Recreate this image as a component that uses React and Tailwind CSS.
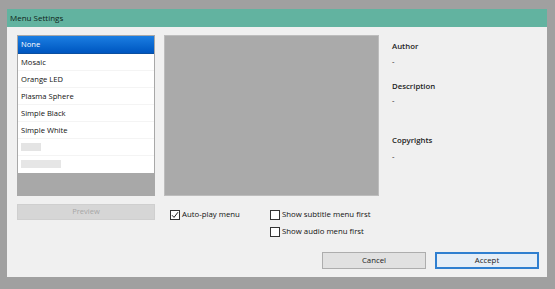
import { useState } from 'react'

const themes = ['None', 'Mosaic', 'Orange LED', 'Plasma Sphere', 'Simple Black', 'Simple White']

const CheckBox = ({ checked, label, onChange }) => (
  <label className="flex items-center gap-[2px] h-[11px] cursor-default">
    <span className="w-[10px] h-[10px] border border-[#333] bg-white flex items-center justify-center">
      {checked && (
        <svg width="8" height="8" viewBox="0 0 8 8">
          <path d="M1 4.2 L3 6.4 L7 1.2" fill="none" stroke="#222" strokeWidth="1" />
        </svg>
      )}
    </span>
    <input type="checkbox" className="hidden" checked={checked} onChange={onChange} />
    <span className="text-[7.8px] text-[#111] leading-none">{label}</span>
  </label>
)

export default function App() {
  const [selected, setSelected] = useState('None')
  const [autoPlay, setAutoPlay] = useState(true)
  const [subFirst, setSubFirst] = useState(false)
  const [audioFirst, setAudioFirst] = useState(false)

  return (
    <div className="w-[555px] h-[289px] bg-[#a0a0a0] pt-[9px] pl-[7px] overflow-hidden" style={{ fontFamily: '"Open Sans", "Noto Sans", sans-serif' }}>
      <div className="w-[540px] h-[268px] bg-[#f0f0f0] flex flex-col">
        {/* Title bar */}
        <div className="h-[18px] bg-[#62b3a0] flex items-center pl-[3px]">
          <span className="text-[8px] font-medium text-[#0f1f19]">Menu Settings</span>
        </div>

        <div className="flex-1 flex flex-col pl-[10px] pr-[8px] pt-[8px] pb-[8px]">
          <div className="flex">
            {/* Theme list */}
            <div className="w-[138px] h-[161px] border border-[#a8a8a8] bg-[#a8a8a8] flex flex-col">
              <div className="bg-white h-[137px] flex flex-col">
                {themes.map((t, i) => (
                  <div
                    key={t}
                    onClick={() => setSelected(t)}
                    className={`${i === 0 ? 'h-[18px]' : 'h-[17px]'} flex items-center pl-[3px] pt-[1px] text-[7.6px] border-b ${
                      selected === t
                        ? 'bg-linear-to-b from-[#1b7ee2] to-[#0056c0] text-white border-[#0a4fa0]'
                        : 'text-[#111] border-[#f4f4f4]'
                    }`}
                  >
                    {t}
                  </div>
                ))}
                <div className="h-[17px] flex items-center pl-[3px] border-b border-[#f4f4f4]">
                  <div className="w-[20px] h-[8px] bg-[#e4e4e4]" />
                </div>
                <div className="h-[16px] flex items-center pl-[3px]">
                  <div className="w-[40px] h-[8px] bg-[#e6e6e6]" />
                </div>
              </div>
            </div>

            {/* Preview panel */}
            <div className="ml-[9px] w-[215px] h-[161px] bg-[#aaaaaa] border border-[#bdbdbd]" />

            {/* Info */}
            <div className="ml-[13px] flex flex-col text-[7.8px] text-[#222] pt-[8px]">
              <span className="font-semibold leading-none">Author</span>
              <span className="mt-[7px] leading-none">-</span>
              <span className="mt-[17px] font-semibold leading-none">Description</span>
              <span className="mt-[7px] leading-none">-</span>
              <span className="mt-[32px] font-semibold leading-none">Copyrights</span>
              <span className="mt-[8px] leading-none">-</span>
            </div>
          </div>

          <div className="flex mt-[8px]">
            <button className="w-[138px] h-[16px] bg-[#d6d6d6] border border-[#cfcfcf] text-[7.5px] text-[#a6a6a6] flex items-center justify-center">
              Preview
            </button>
            <div className="ml-[15px] mt-[5px] w-[100px]">
              <CheckBox checked={autoPlay} label="Auto-play menu" onChange={() => setAutoPlay(!autoPlay)} />
            </div>
            <div className="mt-[5px] flex flex-col gap-[6px]">
              <CheckBox checked={subFirst} label="Show subtitle menu first" onChange={() => setSubFirst(!subFirst)} />
              <CheckBox checked={audioFirst} label="Show audio menu first" onChange={() => setAudioFirst(!audioFirst)} />
            </div>
          </div>

          <div className="mt-auto flex justify-end gap-[9px]">
            <button className="w-[104px] h-[17px] bg-[#e1e1e1] border border-[#adadad] text-[7.8px] text-[#222]">Cancel</button>
            <button className="w-[104px] h-[17px] bg-[#e5eef7] border-2 border-[#2f7fd0] text-[7.8px] text-[#222]">Accept</button>
          </div>
        </div>
      </div>
    </div>
  )
}
